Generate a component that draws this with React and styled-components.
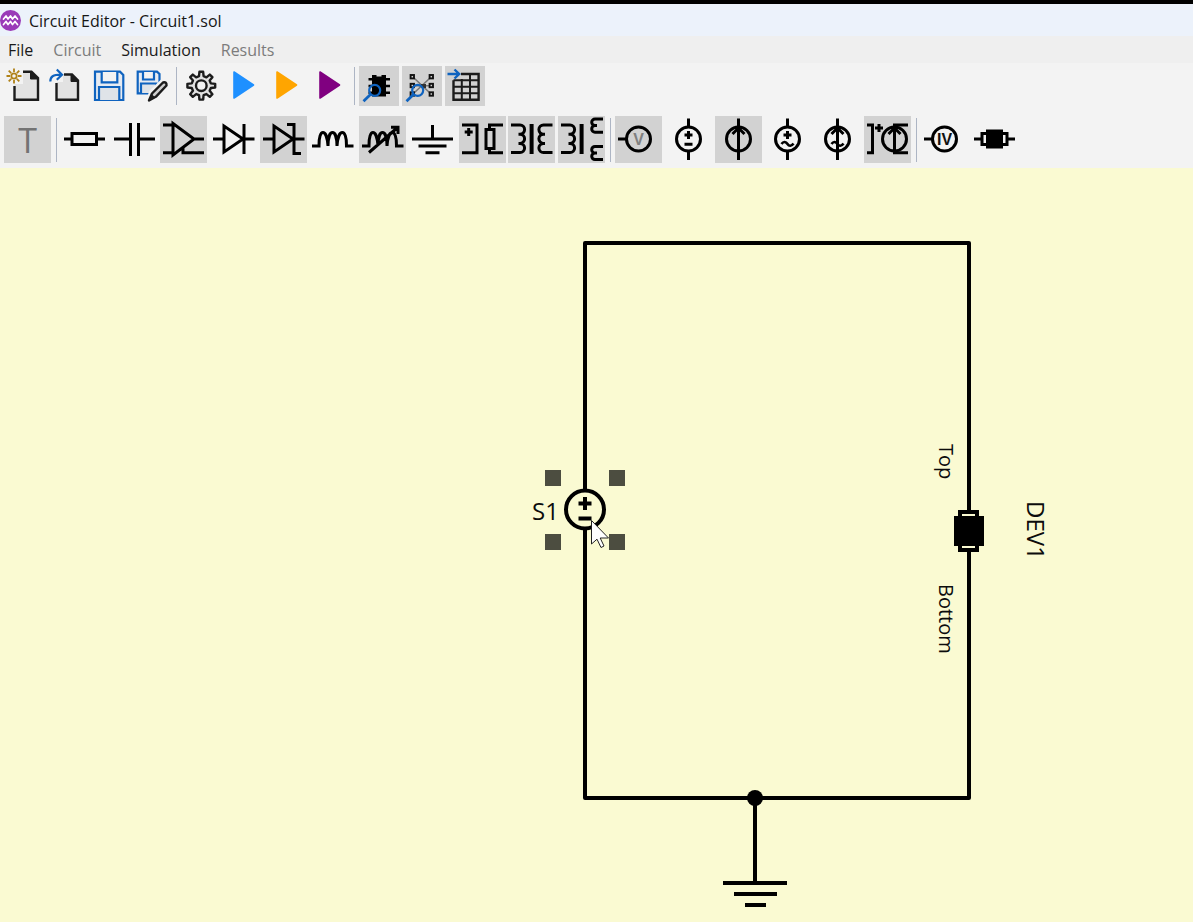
import React from "react";
import styled, { createGlobalStyle } from "styled-components";

const Global = createGlobalStyle`
  *, *::before, *::after { box-sizing: border-box; }
  html, body, #root { height: 100%; margin: 0; }
  body { font-family: "Open Sans", "Noto Sans", sans-serif; background: #f3f3f3; overflow: hidden; }
  button { font: inherit; }
`;

const Window = styled.div`
  display: flex;
  flex-direction: column;
  min-height: 100%;
  border-top: 4px solid #000;
`;

const TitleBar = styled.header`
  display: flex;
  align-items: center;
  gap: 8px;
  height: 32px;
  background: #ecf2fb;
  color: #161616;
`;

const Title = styled.h1`
  margin: 0;
  padding-top: 2px;
  font-size: 16px;
  line-height: 24px;
  font-weight: 400;
`;

const MenuBar = styled.nav`
  display: flex;
  align-items: center;
  gap: 20px;
  height: 27px;
  padding: 0 8px;
  background: #efefef;
`;

const MenuItem = styled.button`
  padding: 0;
  border: 0;
  background: none;
  font-size: 16px;
  line-height: 24px;
  color: #1a1a1a;
  &:disabled { color: #7c7c7c; }
`;

const Toolbar = styled.div`
  display: flex;
  align-items: center;
  gap: ${(p) => p.$gap}px;
  padding: ${(p) => p.$pad};
  background: #f3f3f3;
`;

const PartGroup = styled.div`
  display: flex;
  justify-content: space-between;
  width: ${(p) => p.$width}px;
`;

const ToolButton = styled.button`
  display: flex;
  flex: none;
  align-items: center;
  justify-content: center;
  width: ${(p) => p.$size}px;
  height: ${(p) => p.$size}px;
  padding: 0;
  border: 0;
  background: ${(p) => (p.$shaded ? "#d2d2d2" : "transparent")};
`;

const Separator = styled.span`
  flex: none;
  display: flex;
  justify-content: center;
  width: ${(p) => p.$width}px;
  height: ${(p) => p.$height}px;
  &::before { content: ""; width: 1px; background: #adb5c4; }
`;

const Canvas = styled.main`
  flex: 1;
  display: flex;
  background: #fafad2;
`;

const Schematic = styled.svg`
  display: block;
  width: 100%;
  height: 754px;
  overflow: visible;
`;

const Glyph = styled.svg`
  display: block;
  flex: none;
  overflow: visible;
  fill: none;
  stroke: ${(p) => p.$color || "#000"};
  stroke-width: ${(p) => p.$weight || 3};
`;

const Label = styled.text`
  font-size: ${(p) => p.$size}px;
  fill: #0c0c0c;
  stroke: none;
`;

const ProbeText = styled.text`
  font-family: "Liberation Sans", Arial, sans-serif;
  font-size: 16px;
  font-weight: 700;
  text-anchor: middle;
  fill: ${(p) => p.$fill};
  stroke: none;
`;

const TextToolLabel = styled.text`
  font-size: 34px;
  text-anchor: middle;
  fill: #737373;
  stroke: none;
`;

const BLUE = "#0f63bf";

function gearPath(cx, cy, outer, inner, teeth) {
  const pts = [];
  const step = (Math.PI * 2) / teeth;
  for (let i = 0; i < teeth; i++) {
    const a = i * step - Math.PI / 2;
    [[-0.3, inner], [-0.17, outer], [0.17, outer], [0.3, inner]].forEach(([o, r]) => {
      pts.push(`${(cx + Math.cos(a + o * step) * r).toFixed(2)} ${(cy + Math.sin(a + o * step) * r).toFixed(2)}`);
    });
  }
  return `M${pts.join("L")}Z`;
}

const Magnifier = () => (
  <g stroke={BLUE} strokeWidth="2.2">
    <circle cx="15.7" cy="24.3" r="5.5" />
    <path d="M11.7 28.3L4.5 35.2" strokeWidth="2.8" />
  </g>
);

const Play = ({ color }) => (
  <path d="M10 6L29.5 19L10 32Z" fill={color} stroke={color} strokeWidth="1.6" strokeLinejoin="round" />
);

const fileIcons = {
  fresh: (
    <>
      <path d="M11.5 18V33.7H35V12L28.5 5.7H20V18Z" fill="#e2e2e2" stroke="none" />
      <path d="M11.5 20V33.7H35V12L28.5 5.7H20" />
      <path d="M27.5 5.5V13H35.5Z" fill="#1c1c1c" stroke="#1c1c1c" strokeWidth="1" />
      <circle cx="11" cy="10" r="7" fill="#f3f3f3" stroke="none" />
      <g stroke="#b08218" strokeWidth="1.8">
        <circle cx="11" cy="10" r="2.7" />
        <path d="M11 2.5V6M11 14V17.5M3.5 10H7M15 10H18.5M5.7 4.7L8.2 7.2M13.8 12.8L16.3 15.3M16.3 4.7L13.8 7.2M8.2 12.8L5.7 15.3" />
      </g>
    </>
  ),
  open: (
    <>
      <path d="M10.5 16V33.7H32V14.5L26 8.5H17V16Z" fill="#e2e2e2" stroke="none" />
      <path d="M10.5 17V33.7H32V14.5L26 8.5H18" />
      <path d="M25 8V15.5H32.5Z" fill="#1c1c1c" stroke="#1c1c1c" strokeWidth="1" />
      <path d="M4.3 15.5C4.3 10.5 7 8.7 15 8.7M10.8 3.5L16 8.7L10.8 13.7" stroke={BLUE} strokeWidth="2.2" />
    </>
  ),
  save: (
    <g stroke={BLUE} strokeWidth="2.2">
      <path d="M6 5.7H31L34.3 9V34H6Z" fill="#e6ebf2" />
      <path d="M12.7 6V16.3H28.3V6" fill="#f3f3f3" />
      <path d="M10 34V21H30.3V34" fill="#dfe3e8" />
    </g>
  ),
  saveAs: (
    <>
      <g stroke={BLUE} strokeWidth="2.2">
        <path d="M5.7 5.7H25L27.5 8V27.3H5.7Z" fill="#e6ebf2" />
        <path d="M11 6V13.5H22V6" fill="#f3f3f3" />
        <path d="M9 27V17.5H24.5V27" fill="#dfe3e8" />
      </g>
      <path d="M16 35L19 26L31 14.5Q35 14 35.5 18.5L24.5 31Z" fill="#f3f3f3" stroke="#f3f3f3" strokeWidth="4" />
      <path d="M17 34.5L20 27.5L31 16.5Q34.8 15.5 34.5 19.5L23.8 30.8Z" fill="#cfcfcf" strokeLinejoin="round" />
      <path d="M16.2 35L19.5 28L23.3 31.5Z" fill="#1c1c1c" stroke="none" />
    </>
  ),
  settings: (
    <>
      <path d={gearPath(20.3, 19.7, 14, 9.8, 8)} fill="#e2e2e2" strokeLinejoin="round" />
      <circle cx="20.3" cy="19.7" r="5.3" fill="#f3f3f3" />
    </>
  ),
  runBlue: <Play color="#1e90ff" />,
  runOrange: <Play color="#ffa500" />,
  runPurple: <Play color="#800080" />,
  chip: (
    <>
      <path d="M13 9H17.5V10.5H22.5V9H27V30.5H13Z" fill="#000" stroke="none" />
      <path d="M9.5 13.2H31M9.5 20H31M9.5 26.8H31" stroke="#000" strokeWidth="2.6" />
      <Magnifier />
    </>
  ),
  network: (
    <>
      <path d="M12 12L28 27M28 12L12 27M12 19.7H28" stroke="#777" strokeWidth="1.6" />
      <rect x="19" y="18" width="5" height="4" fill="#333" stroke="none" />
      {[10.3, 29.3].map((x) => [10.7, 19.5, 28].map((y) => (
        <rect key={`${x}-${y}`} x={x - 1.7} y={y - 1.7} width="3.4" height="3.4" fill="#d2d2d2" stroke="#111" strokeWidth="1.9" />
      )))}
      <Magnifier />
    </>
  ),
  table: (
    <>
      <path d="M8.5 14.3V33.8H33.6V8H16" />
      <path d="M8.5 14.3H33.6M8.5 20.8H33.6M8.5 27.3H33.6M16.8 13V34M25 8V34" strokeWidth="2" />
      <path d="M2.5 8H14M9.5 3.5L14.2 8L9.5 12.5" stroke={BLUE} strokeWidth="2.4" />
    </>
  ),
};

const coilLeft = "M3 9H12A4.6 4.6 0 0 1 12 18.2H10.5M12 18.2A4.6 4.6 0 0 1 12 27.4H10.5M12 27.4A4.6 4.6 0 0 1 12 36.6H3";
const coilRight = "M44.5 9H35.5A4.6 4.6 0 0 0 35.5 18.2H37M35.5 18.2A4.6 4.6 0 0 0 35.5 27.4H37M35.5 27.4A4.6 4.6 0 0 0 35.5 36.6H44.5";
const inductor = "M3 30H10C9.5 12 18 12 19 30C19 12 28 12 28 30C29 12 38 12 37.5 30H44.5";
const tilde = "M17.5 28C19.5 25 22 25.5 23.5 28S27.5 30.5 29.5 27.5";

const Ring = ({ cx = 23.5 }) => <circle cx={cx} cy="23" r="12" />;
const Plus = ({ x, y, r = 4 }) => <path d={`M${x - r} ${y}H${x + r}M${x} ${y - r}V${y + r}`} />;

const partIcons = {
  text: <TextToolLabel x="23.5" y="37">T</TextToolLabel>,
  resistor: <path d="M3 23H11M35.5 23H44M11 17.5H35.5V28.5H11Z" />,
  capacitor: <path d="M3 23H19.5M19.5 7V40M27.5 7V40M27.5 23H44" />,
  opamp: <path d="M13 7.5L34 23L13 39Z M3 9H13M3 36.7H13M34 23H44M23 31V36.7H44" />,
  diode: <path d="M3 23H14M33 23H44.5M14 10V36L33 23ZM34 8V38" />,
  zener: <path d="M3 23H14M33 23H44.5M14 10V36L33 23ZM27 8.5H34V37.5H41" />,
  inductor: <path d={inductor} />,
  varInductor: <path d={`${inductor}M10 36.5L38 12M32 11.2H39V18`} />,
  ground: <path d="M23.5 9V23M3 23H44M9.5 30H37.5M16.5 36.8H30.5" />,
  vSense: (
    <>
      <path d="M3 9H18V36.7H3M27 13.5H35V32.5H27ZM44 9H30.5V13.5M30.5 32.5V36.7H44" />
      <Plus x={9.7} y={16} />
    </>
  ),
  transformer: (
    <>
      <path d={`${coilLeft}${coilRight}`} />
      <path d="M23.6 8V38" strokeWidth="4" />
    </>
  ),
  splitTransformer: (
    <>
      <path d={coilLeft} />
      <path d="M23.6 8V38" strokeWidth="4" />
      <path d="M45 3H37A3.3 3.3 0 0 0 37 9.6H39M37 9.6A3.3 3.3 0 0 0 37 16.2H45M45 30.4H37A3.3 3.3 0 0 0 37 37H39M37 37A3.3 3.3 0 0 0 37 43.6H45" />
    </>
  ),
  voltProbe: (
    <>
      <path d="M3 23H11" />
      <Ring />
      <ProbeText x="23.5" y="29" $fill="#808080">V</ProbeText>
    </>
  ),
  vSource: (
    <>
      <path d="M23.5 2.5V11M23.5 35V44M19.5 28.3H27.5" />
      <Ring />
      <Plus x={23.5} y={19} />
    </>
  ),
  iSource: (
    <>
      <path d="M23.5 2.5V44M17.5 18L23.5 12L29.5 18" />
      <Ring />
    </>
  ),
  acVSource: (
    <>
      <path d="M23.5 2.5V11M23.5 35V44" />
      <path d={tilde} strokeWidth="2.6" />
      <Ring />
      <Plus x={23.5} y={19} />
    </>
  ),
  acISource: (
    <>
      <path d="M23.5 2.5V44M17.5 18L23.5 12L29.5 18" />
      <path d={tilde} strokeWidth="2.6" />
      <Ring />
    </>
  ),
  controlledSource: (
    <>
      <path d="M3 9H8.5V36.7H3M44 9H30.5V36.7H44M24.5 18L30.5 12L36.5 18" />
      <Ring cx={30.5} />
      <Plus x={15} y={12} />
    </>
  ),
  ivProbe: (
    <>
      <path d="M3 23H11" />
      <Ring />
      <ProbeText x="23.5" y="29" $fill="#111">IV</ProbeText>
    </>
  ),
  device: (
    <>
      <path d="M3 23H11M36 23H44M11 17.5H36V28.5H11Z" />
      <rect x="15" y="13.5" width="17" height="19" fill="#000" stroke="none" />
    </>
  ),
};

const fileTools = [
  [["fresh", "New circuit"], ["open", "Open"], ["save", "Save"], ["saveAs", "Save as"]],
  [["settings", "Settings"], ["runBlue", "Run"], ["runOrange", "Run sweep"], ["runPurple", "Run analysis"]],
  [["chip", "Inspect device", true], ["network", "Inspect network", true], ["table", "Export table", true]],
];

const partTools = [
  { width: 47, items: [["text", "Text", true]] },
  {
    width: 544,
    items: [
      ["resistor", "Resistor"], ["capacitor", "Capacitor"], ["opamp", "Amplifier", true],
      ["diode", "Diode"], ["zener", "Zener diode", true], ["inductor", "Inductor"],
      ["varInductor", "Variable inductor", true], ["ground", "Ground"],
      ["vSense", "Voltage controlled resistor", true], ["transformer", "Transformer", true],
      ["splitTransformer", "Split transformer", true],
    ],
  },
  {
    width: 296,
    items: [
      ["voltProbe", "Voltage probe", true], ["vSource", "Voltage source"],
      ["iSource", "Current source", true], ["acVSource", "AC voltage source"],
      ["acISource", "AC current source"], ["controlledSource", "Controlled source", true],
    ],
  },
  { width: 97, items: [["ivProbe", "IV probe"], ["device", "Device"]] },
];

const menus = [["File", true], ["Circuit", false], ["Simulation", true], ["Results", false]];

function Logo() {
  return (
    <svg width="21" height="21" viewBox="0 0 21 21" fill="none" aria-hidden="true">
      <circle cx="10.5" cy="10.5" r="10.5" fill="#9a3bb8" />
      <path
        d="M3.5 9L6 6L8 9L10.5 6L12.5 9L15 6L17.5 9M3.5 14.5L6 11.5L8 14.5L10.5 11.5L12.5 14.5L15 11.5L17.5 14.5"
        stroke="#fff" strokeWidth="1.7" strokeLinejoin="round" strokeLinecap="round"
      />
    </svg>
  );
}

function Circuit() {
  return (
    <Schematic aria-label="Circuit schematic">
      <g fill="none" stroke="#000" strokeWidth="4">
        <path d="M585 322V75H969V343M969 382V630H585V361" strokeLinejoin="round" />
        <path d="M755 630V715M723 715H787M734 726H777M745 737H766" />
        <circle cx="585" cy="341.5" r="19" />
        <path d="M578.5 335.5H591.5M585 329V342M578.5 350.5H591.5" />
        <rect x="960" y="344" width="17" height="38" />
      </g>
      <circle cx="755" cy="630" r="8" />
      <rect x="954" y="348" width="30" height="30" />
      <g fill="#4c4d40">
        <rect x="545" y="302" width="16" height="16" />
        <rect x="609" y="302" width="16" height="16" />
        <rect x="545" y="366" width="16" height="16" />
        <rect x="609" y="366" width="16" height="16" />
      </g>
      <Label x="532" y="352" $size={24}>S1</Label>
      <Label transform="translate(939 276) rotate(90)" $size={20}>Top</Label>
      <Label transform="translate(939 416) rotate(90)" $size={20}>Bottom</Label>
      <Label transform="translate(1027 333) rotate(90)" $size={24}>DEV1</Label>
      <path
        d="M591.5 352.5V376L597 371.2L601 379.5L604 378L600.2 370H608.5Z"
        fill="#fff" stroke="#222" strokeWidth="1"
      />
    </Schematic>
  );
}

export default function App() {
  return (
    <Window>
      <Global />
      <TitleBar>
        <Logo />
        <Title>Circuit Editor - Circuit1.sol</Title>
      </TitleBar>
      <MenuBar>
        {menus.map(([name, on]) => (
          <MenuItem key={name} disabled={!on}>{name}</MenuItem>
        ))}
      </MenuBar>
      <Toolbar $gap={3} $pad="3px 3px 0">
        {fileTools.map((group, i) => (
          <React.Fragment key={i}>
            {i > 0 && <Separator $width={3} $height={38} />}
            {group.map(([id, label, shaded]) => (
              <ToolButton key={id} $size={40} $shaded={shaded} aria-label={label}>
                <Glyph width="40" height="40" viewBox="0 0 40 40" $color="#1c1c1c" $weight={2.4} aria-hidden="true">
                  {fileIcons[id]}
                </Glyph>
              </ToolButton>
            ))}
          </React.Fragment>
        ))}
      </Toolbar>
      <Toolbar $gap={0} $pad="10px 4px 5px">
        {partTools.map((group, i) => (
          <React.Fragment key={i}>
            {i > 0 && <Separator $width={10} $height={44} />}
            <PartGroup $width={group.width}>
              {group.items.map(([id, label, shaded]) => (
                <ToolButton key={id} $size={47} $shaded={shaded} aria-label={label}>
                  <Glyph width="47" height="47" viewBox="0 0 47 47" aria-hidden="true">
                    {partIcons[id]}
                  </Glyph>
                </ToolButton>
              ))}
            </PartGroup>
          </React.Fragment>
        ))}
      </Toolbar>
      <Canvas>
        <Circuit />
      </Canvas>
    </Window>
  );
}
